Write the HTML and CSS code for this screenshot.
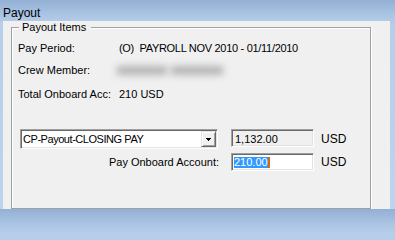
FILE: index.html
```html
<!DOCTYPE html>
<html>
<head>
<meta charset="utf-8">
<title>Payout</title>
<link rel="stylesheet" href="styles.css">
</head>
<body>
<div class="window">
  <div class="title">Payout</div>
  <div class="client">
    <fieldset class="group">
      <legend class="group-label">Payout Items</legend>
      <div class="info">
        <div class="lbl">Pay Period:</div>
        <div class="val caps">(O)&nbsp; PAYROLL NOV 2010 - 01/11/2010</div>
        <div class="lbl">Crew Member:</div>
        <div class="val"><span class="blur b1"></span><span class="blur b2"></span></div>
        <div class="lbl">Total Onboard Acc:</div>
        <div class="val">210 USD</div>
      </div>
      <div class="amounts">
        <div class="combo">
          <span class="combo-text">CP-Payout-CLOSING PAY</span>
          <span class="combo-btn">
            <svg width="5" height="3" viewBox="0 0 5 3" shape-rendering="crispEdges"><rect x="0" y="0" width="5" height="1" fill="#000"/><rect x="1" y="1" width="3" height="1" fill="#000"/><rect x="2" y="2" width="1" height="1" fill="#000"/></svg>
          </span>
        </div>
        <div class="field readonly">1,132.00</div>
        <div class="cur">USD</div>
        <div class="lbl2">Pay Onboard Account:</div>
        <div class="field edit"><span class="sel">210.00</span></div>
        <div class="cur cur2">USD</div>
      </div>
    </fieldset>
  </div>
</div>
</body>
</html>
```
FILE: styles.css
```css
html, body {
  margin: 0;
  padding: 0;
}
body {
  width: 395px;
  height: 209px;
  background: linear-gradient(180deg, #93b0d3 0px, #a9c3e3 14px, #b6cee9 24px, #bcd4f0 100%);
  font-family: "Liberation Sans", Arial, sans-serif;
  color: #000;
}
.window {
  display: flex;
  flex-direction: column;
  height: 209px;
}
.title {
  height: 22px;
  box-sizing: border-box;
  padding: 5px 0 0 3px;
  font-size: 12px;
  line-height: 16px;
}
.client {
  flex: 1;
  margin-left: 3px;
  width: 387px;
  background: #f0f0f0;
}
.group {
  margin: 0 0 0 8px;
  padding: 0 6px;
  width: 360px;
  height: 188px;
  box-sizing: border-box;
  min-width: 0;
  border: 1px solid #a0a0a0;
  box-shadow: inset 1px 1px 0 #fff, 1px 1px 0 #fff;
  font-size: 11px;
}
.group-label {
  margin-left: 1px;
  padding: 0 5px 0 3px;
  line-height: 13px;
  background: #f0f0f0;
}
.info {
  display: grid;
  grid-template-columns: 101px auto;
  grid-template-rows: 22px 24px 13px;
  line-height: 13px;
  margin-top: 8px;
}
.caps {
  letter-spacing: -0.3px;
}
.blur {
  display: inline-block;
  vertical-align: top;
  height: 9px;
  margin-top: 2px;
  background: #b4b4b4;
  filter: blur(3.5px);
}
.b1 {
  width: 50px;
  margin-left: -2px;
}
.b2 {
  width: 52px;
  margin-left: 4px;
}
.amounts {
  display: grid;
  grid-template-columns: 213px 83px auto;
  grid-template-rows: 20px 18px;
  row-gap: 4px;
  margin-top: 28px;
}
.combo {
  margin-left: 2px;
  width: 198px;
  height: 20px;
  box-sizing: border-box;
  display: flex;
  background: #fff;
  border: 1px solid;
  border-color: #a0a0a0 #fff #fff #a0a0a0;
  box-shadow: inset 1px 1px 0 #696969, inset -1px -1px 0 #e3e3e3;
  padding: 1px;
}
.combo-text {
  flex: 1;
  padding: 1px 0 0 1px;
  line-height: 14px;
  letter-spacing: -0.45px;
  white-space: nowrap;
}
.combo-btn {
  width: 15px;
  height: 16px;
  box-sizing: border-box;
  background: #f0f0f0;
  border: 1px solid;
  border-color: #e3e3e3 #696969 #696969 #e3e3e3;
  box-shadow: inset 1px 1px 0 #fff, inset -1px -1px 0 #a0a0a0;
  display: flex;
  align-items: center;
  justify-content: center;
  padding-top: 1px;
}
.combo-btn svg {
  display: block;
}
.field {
  height: 18px;
  box-sizing: border-box;
  border: 1px solid;
  border-color: #a0a0a0 #fff #fff #a0a0a0;
  box-shadow: inset 1px 1px 0 #696969, inset -1px -1px 0 #e3e3e3;
  white-space: nowrap;
}
.readonly {
  background: #f0f0f0;
  padding: 2px 0 0 3px;
  line-height: 14px;
}
.edit {
  background: #fff;
  padding: 3px 0 0 2px;
}
.sel {
  display: inline-block;
  vertical-align: top;
  height: 11px;
  line-height: 11px;
  background: #3399ff;
  color: #fff;
  border-right: 2px solid #cc6a22;
}
.cur {
  padding-left: 7px;
  font-size: 12px;
  line-height: 20px;
}
.cur2 {
  line-height: 18px;
}
.lbl2 {
  text-align: right;
  padding-right: 12px;
  line-height: 18px;
}
```
